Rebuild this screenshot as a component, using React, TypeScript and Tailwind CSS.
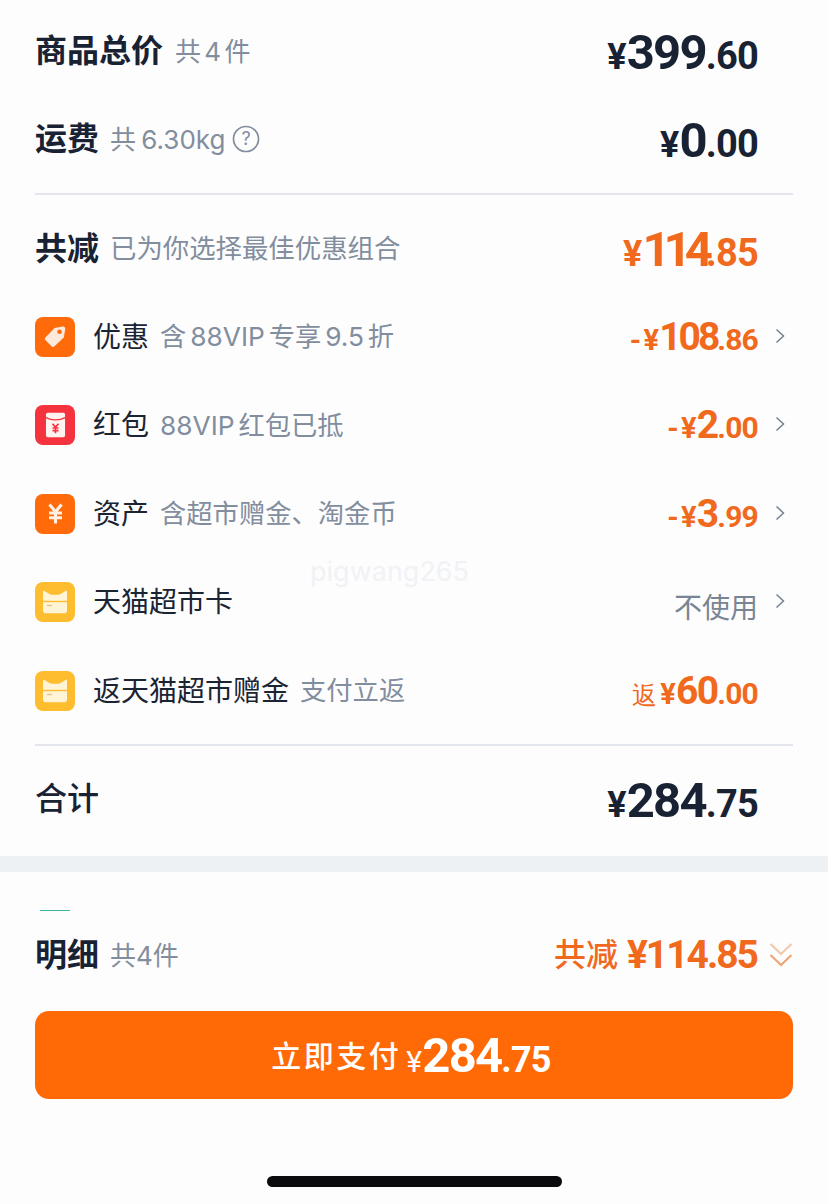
const cjk = "font-['Inter','Noto_Sans_CJK_SC',sans-serif]";

const Price = ({ big, small, size, smallSize, yen, color, prefix }: { big: string; small: string; size: string; smallSize: string; yen: string; color: string; prefix?: React.ReactNode }) => (
  <div className={`flex items-baseline font-['Roboto',sans-serif] font-bold tracking-[-1.800px] ${color}`}>
    {prefix}
    <span className={`mr-[2px] ${yen}`}>¥</span>
    <span className={size}>{big}</span>
    <span className={`tracking-[-0.800px] ${smallSize}`}>.{small}</span>
  </div>
);

const Chevron = () => (
  <svg width="10" height="16" viewBox="0 0 10 16" fill="none" className="ml-[17px] -mt-[2px] mr-[8px] shrink-0">
    <path d="M1.500 1.500 8.500 8l-7 6.500" stroke="#75808f" strokeWidth="1.500" />
  </svg>
);

const IconBox = ({ bg, children }: { bg: string; children: React.ReactNode }) => (
  <div className={`flex h-[40px] w-[40px] shrink-0 items-center justify-center rounded-[8px] ${bg}`}>{children}</div>
);

const TagIcon = () => (
  <IconBox bg="bg-[#ff6a0a]">
    <svg width="25" height="25" viewBox="0 0 28 28">
      <path d="M13 4.500 22 2.800c1.700-.3 3.200 1.100 2.900 2.800L23.300 15 12.600 25.200c-.8.800-2 .800-2.800 0L2.700 18c-.8-.8-.8-2 0-2.800Z" fill="#ffe9dc" />
      <circle cx="18.500" cy="8.700" r="2.600" fill="#ff6a0a" />
    </svg>
  </IconBox>
);

const PacketIcon = () => (
  <IconBox bg="bg-[#f5333f]">
    <svg width="21" height="26" viewBox="0 0 24 30">
      <rect x="1" y="1" width="22" height="28" rx="2" fill="#fff3f0" />
      <path d="M1 6.500c6 3.500 16 3.500 22 0" stroke="#f5333f" strokeWidth="1.400" fill="none" />
      <path d="M8.500 13.500 12 17.500l3.500-4M8.500 18.500h7M8.500 21.500h7M12 17.500v7" stroke="#f5333f" strokeWidth="1.900" fill="none" />
    </svg>
  </IconBox>
);

const YenIcon = () => (
  <IconBox bg="bg-[#ff6a0a]">
    <svg width="19" height="23" viewBox="0 0 22 26">
      <path d="M4 2.500 11 11l7-8.500M3.500 12.500h15M3.500 18h15M11 11v13.500" stroke="#fff0e5" strokeWidth="3.600" fill="none" />
    </svg>
  </IconBox>
);

const CardIcon = () => (
  <IconBox bg="bg-[#fdbd2e]">
    <svg width="26" height="24" viewBox="0 0 26 24">
      <path d="M2.500 1 7 3.800c1 .6 2 .9 3 .9h6c1 0 2-.3 3-.9L23.500 1c.7-.4 1.500.1 1.500.9V21c0 1.200-1 2.200-2.200 2.200H3.200C2 23.200 1 22.200 1 21V1.900C1 1.100 1.800.6 2.500 1Z" fill="#fff4d6" />
      <path d="M1 11.500h24" stroke="#fdbd2e" strokeWidth="1.400" />
      <path d="M5 15.500h5" stroke="#e3c48a" strokeWidth="1.500" />
    </svg>
  </IconBox>
);

const Row = ({ icon, label, note, right, chevron = true }: { icon: React.ReactNode; label: string; note?: string; right: React.ReactNode; chevron?: boolean }) => (
  <div className="flex h-[88.500px] items-center">
    {icon}
    <span className="ml-[18px] text-[28px] text-[#1b2432]">{label}</span>
    {note && <span className="ml-[11px] text-[26.300px] text-[#828d9d] [word-spacing:-3.500px]">{note}</span>}
    <div className="ml-auto flex items-center">
      {right}
      {chevron ? <Chevron /> : <div className="w-[35px]" />}
    </div>
  </div>
);

const orange = 'text-[#f0691c]';
const minus = <span className="mr-[4px] text-[29px]">-</span>;

const BigPrice = ({ big, small, color, size = 'text-[49px]' }: { big: string; small: string; color: string; size?: string }) => (
  <div className="ml-auto mr-[35px] mt-[3px]">
    <Price big={big} small={small} size={size} smallSize="text-[38px]" yen="text-[36px]" color={color} />
  </div>
);

const ItemPrice = ({ big, small, prefix, size = 'text-[39px]' }: { big: string; small: string; prefix: React.ReactNode; size?: string }) => (
  <Price big={big} small={small} size={size} smallSize="text-[30px]" yen="text-[29px]" color={orange} prefix={prefix} />
);

export default function App() {
  return (
    <div className={`relative flex h-[1204px] w-[828px] flex-col overflow-hidden bg-[#fdfdfe] ${cjk}`}>
      <div className="px-[35px] pt-[7px]">
        <div className="flex h-[88px] items-center">
          <span className="text-[32px] font-bold text-[#192233]">商品总价</span>
          <span className="ml-[12px] text-[26px] text-[#828d9d] [word-spacing:-4px]">共 4 件</span>
          <BigPrice big="399" small="60" color="text-[#192233]" />
        </div>
        <div className="flex h-[88px] items-center">
          <span className="text-[32px] font-bold text-[#192233]">运费</span>
          <span className="ml-[11px] text-[26px] text-[#828d9d] [word-spacing:-2px]">共 6.30kg</span>
          <svg width="28" height="28" viewBox="0 0 28 28" fill="none" className="ml-[7px]">
            <circle cx="14" cy="14" r="12.500" stroke="#828d9d" strokeWidth="1.700" />
            <text x="14" y="20" textAnchor="middle" fontSize="18" fill="#828d9d">?</text>
          </svg>
          <BigPrice big="0" small="00" color="text-[#192233]" />
        </div>
        <div className="mt-[10px] h-[1.500px] bg-[#e3e6ec]" />
        <div className="mt-[10px] flex h-[88px] items-center">
          <span className="text-[32px] font-bold text-[#192233]">共减</span>
          <span className="ml-[11px] text-[26.400px] text-[#828d9d]">已为你选择最佳优惠组合</span>
          <BigPrice big="114" small="85" color={orange} size="text-[49px] tracking-[-7px]" />
        </div>
        <Row icon={<TagIcon />} label="优惠" note="含 88VIP 专享 9.5 折" right={<ItemPrice big="108" small="86" prefix={minus} size="text-[39px] tracking-[-3px]" />} />
        <Row icon={<PacketIcon />} label="红包" note="88VIP 红包已抵" right={<ItemPrice big="2" small="00" prefix={minus} />} />
        <Row icon={<YenIcon />} label="资产" note="含超市赠金、淘金币" right={<ItemPrice big="3" small="99" prefix={minus} />} />
        <Row icon={<CardIcon />} label="天猫超市卡" right={<span className="mt-[12px] text-[28px] text-[#7a8594]">不使用</span>} />
        <Row icon={<CardIcon />} label="返天猫超市赠金" note="支付立返" chevron={false} right={<ItemPrice big="60" small="00" prefix={<span className="mr-[3px] text-[25px] font-medium tracking-normal">返</span>} />} />
        <div className="mt-[9px] h-[1.500px] bg-[#e3e6ec]" />
        <div className="flex h-[110px] items-center pb-[3px]">
          <span className="text-[32px] font-medium text-[#192233]">合计</span>
          <BigPrice big="284" small="75" color="text-[#192233]" />
        </div>
      </div>
      <div className="h-[16px] bg-[#eef1f4]" />
      <div className="px-[35px]">
        <div className="ml-[5px] mt-[38px] h-[1.500px] w-[30px] bg-[#3fb59e]" />
        <div className="mt-[22px] flex h-[44px] items-center">
          <span className="text-[32px] font-bold text-[#192233]">明细</span>
          <span className="ml-[11px] text-[26px] text-[#828d9d]">共4件</span>
          <div className="ml-auto flex items-center">
            <span className={`text-[32px] font-medium ${orange}`}>共减</span>
            <span className={`ml-[9px] font-['Roboto',sans-serif] text-[39px] font-bold tracking-[-2px] ${orange}`}>¥114.85</span>
            <svg width="24" height="26" viewBox="0 0 24 26" fill="none" className="ml-[12px]">
              <path d="M1.500 2 12 12 22.500 2" stroke="#f4c9ab" strokeWidth="2.200" />
              <path d="M1.500 13 12 23 22.500 13" stroke="#eda578" strokeWidth="2.200" />
            </svg>
          </div>
        </div>
        <button className="mt-[34px] flex h-[88px] w-full items-center justify-center rounded-[14px] bg-[#ff6a07] pr-[6px] pt-[2px] text-white">
          <span className="text-[30px] font-medium tracking-[2.500px]">立即支付</span>
          <span className="ml-[5px]">
            <Price big="284" small="75" size="text-[49px]" smallSize="text-[36px]" yen="text-[30px] font-normal" color="text-white" />
          </span>
        </button>
      </div>
      <div className="mx-auto mt-[77px] h-[11px] w-[295px] rounded-full bg-[#0b0b0d]" />
      <span className="absolute left-[310px] top-[552px] text-[27px] text-[#f0f2f5]">pigwang265</span>
    </div>
  );
}
